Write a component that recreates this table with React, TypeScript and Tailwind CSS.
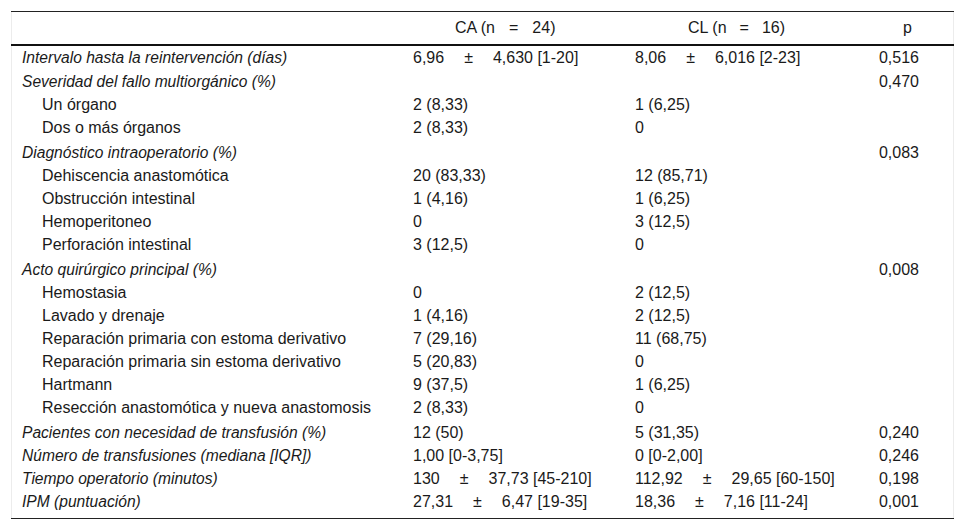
type Row = {
  label: string;
  ca?: React.ReactNode;
  cl?: React.ReactNode;
  p?: string;
  kind: "head" | "item";
  gap?: string;
};

const PlusMinus = ({ a, b }: { a: string; b: string }) => (
  <>
    {a}
    <span className="mx-[20px]">±</span>
    {b}
  </>
);

const rows: Row[] = [
  {
    label: "Intervalo hasta la reintervención (días)",
    ca: <PlusMinus a="6,96" b="4,630 [1-20]" />,
    cl: <PlusMinus a="8,06" b="6,016 [2-23]" />,
    p: "0,516",
    kind: "head",
  },
  { label: "Severidad del fallo multiorgánico (%)", p: "0,470", kind: "head", gap: "pt-px" },
  { label: "Un órgano", ca: "2 (8,33)", cl: "1 (6,25)", kind: "item" },
  { label: "Dos o más órganos", ca: "2 (8,33)", cl: "0", kind: "item" },
  { label: "Diagnóstico intraoperatorio (%)", p: "0,083", kind: "head", gap: "pt-[2px]" },
  { label: "Dehiscencia anastomótica", ca: "20 (83,33)", cl: "12 (85,71)", kind: "item" },
  { label: "Obstrucción intestinal", ca: "1 (4,16)", cl: "1 (6,25)", kind: "item" },
  { label: "Hemoperitoneo", ca: "0", cl: "3 (12,5)", kind: "item" },
  { label: "Perforación intestinal", ca: "3 (12,5)", cl: "0", kind: "item" },
  { label: "Acto quirúrgico principal (%)", p: "0,008", kind: "head", gap: "pt-[2px]" },
  { label: "Hemostasia", ca: "0", cl: "2 (12,5)", kind: "item" },
  { label: "Lavado y drenaje", ca: "1 (4,16)", cl: "2 (12,5)", kind: "item" },
  { label: "Reparación primaria con estoma derivativo", ca: "7 (29,16)", cl: "11 (68,75)", kind: "item" },
  { label: "Reparación primaria sin estoma derivativo", ca: "5 (20,83)", cl: "0", kind: "item" },
  { label: "Hartmann", ca: "9 (37,5)", cl: "1 (6,25)", kind: "item" },
  { label: "Resección anastomótica y nueva anastomosis", ca: "2 (8,33)", cl: "0", kind: "item" },
  {
    label: "Pacientes con necesidad de transfusión (%)",
    ca: "12 (50)",
    cl: "5 (31,35)",
    p: "0,240",
    kind: "head",
    gap: "pt-[2px]",
  },
  { label: "Número de transfusiones (mediana [IQR])", ca: "1,00 [0-3,75]", cl: "0 [0-2,00]", p: "0,246", kind: "head" },
  {
    label: "Tiempo operatorio (minutos)",
    ca: <PlusMinus a="130" b="37,73 [45-210]" />,
    cl: <PlusMinus a="112,92" b="29,65 [60-150]" />,
    p: "0,198",
    kind: "head",
  },
  {
    label: "IPM (puntuación)",
    ca: <PlusMinus a="27,31" b="6,47 [19-35]" />,
    cl: <PlusMinus a="18,36" b="7,16 [11-24]" />,
    p: "0,001",
    kind: "head",
  },
];

const grid = "grid grid-cols-[392px_222px_230px_1fr]";

export default function App() {
  return (
    <div className="min-h-[530px] bg-white px-[11px] pt-[11px] font-['Liberation_Sans',Arial,sans-serif] text-[16px] text-[#1a1a1a]">
      <div className="border-x border-[#ececec]">
        {/* header */}
        <div className={`${grid} h-[35px] items-center border-t border-[#222] border-b-2 border-b-[#111] -mx-px`}>
          <div />
          <div className="whitespace-pre pl-[52px]">
            CA (n<span className="mx-[14px]">=</span>24)
          </div>
          <div className="whitespace-pre pl-[63px]">
            CL (n<span className="mx-[13px]">=</span>16)
          </div>
          <div className="pr-[42px] text-right">p</div>
        </div>

        {/* body */}
        <div className="border-b border-[#222] -mx-px pb-[5px]">
          {rows.map((r) => (
            <div key={r.label} className={`${grid} items-center leading-[23px] ${r.gap ?? ""}`}>
              <div className={r.kind === "head" ? "pl-[11px] text-[15.6px] italic" : "pl-[31px]"}>{r.label}</div>
              <div className="whitespace-pre pl-[10px]">{r.ca}</div>
              <div className="whitespace-pre pl-[10px]">{r.cl}</div>
              <div className="pr-[35px] text-right">{r.p}</div>
            </div>
          ))}
        </div>
      </div>
    </div>
  );
}
